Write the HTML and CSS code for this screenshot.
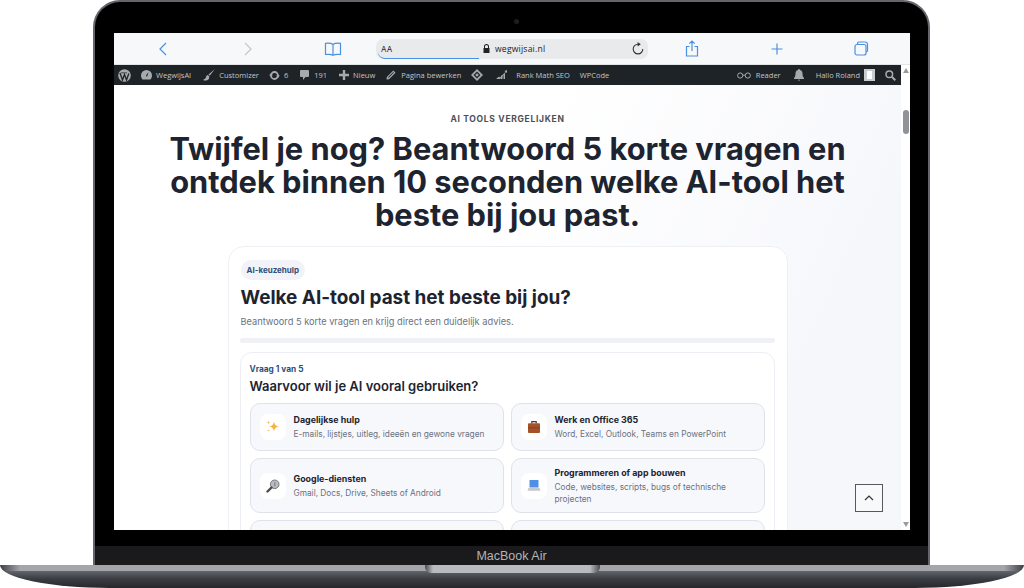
FILE: index.html
```html
<!DOCTYPE html>
<html lang="nl">
<head>
<meta charset="utf-8">
<title>WegwijsAI</title>
<link rel="stylesheet" href="styles.css">
</head>
<body>
<div class="device">
  <div class="lid">
    <div class="bezel"><span class="camera"></span></div>
    <div class="screen">
      <div class="toolbar">
        <span class="slot"><svg width="12" height="16" viewBox="0 0 12 16"><path class="blue" d="M9 2 3 8l6 6"/></svg></span>
        <span class="slot"><svg width="12" height="16" viewBox="0 0 12 16"><path class="grey" d="m3 2 6 6-6 6"/></svg></span>
        <span class="slot"><svg width="18" height="14" viewBox="0 0 18 14"><path class="blue" d="M9 2.500C7.500 1.200 4.500 1 1.500 1.300V12.500C4.500 12.200 7.500 12.300 9 13.300 10.500 12.300 13.500 12.200 16.500 12.500V1.300C13.500 1 10.500 1.200 9 2.500V13.300"/></svg></span>
        <div class="address">
          <span class="aa">AA</span>
          <svg class="lock" width="7" height="9" viewBox="0 0 7 9"><path fill="#222" d="M1 4V2.600a2.500 2.500 0 0 1 5 0V4h.5v5H.5V4zm1 0h3V2.600a1.500 1.500 0 0 0-3 0z"/></svg>
          <span class="domain">wegwijsai.nl</span>
          <svg class="reload" width="12" height="13" viewBox="0 0 12 13"><path fill="none" stroke="#333" stroke-width="1.100" d="M6 2.300a4.800 4.800 0 1 0 4.800 4.800"/><path fill="#333" d="M5.600 0 8.800 2.300 5.600 4.500z"/></svg>
        </div>
        <span class="slot"><svg width="14" height="17" viewBox="0 0 14 17"><path class="blue" d="M4.500 6.500H1.500v9.500h11V6.500h-3M7 11V1.200M4.300 3.700 7 1l2.700 2.700"/></svg></span>
        <span class="slot"><svg width="14" height="14" viewBox="0 0 14 14"><path class="blue" d="M7 1.500v11M1.500 7h11"/></svg></span>
        <span class="slot"><svg width="15" height="15" viewBox="0 0 15 15"><path class="blue" d="M3.500 3V2.500a1.500 1.500 0 0 1 1.500-1.500h6a2.500 2.500 0 0 1 2.500 2.500V9.500a1.500 1.500 0 0 1-1.500 1.500"/><rect class="blue" x="1" y="3.500" width="11" height="10.500" rx="2"/></svg></span>
      </div>
      <div class="viewport">
        <div class="site">
          <nav class="wpbar">
            <span class="wp wp-logo"><svg width="13" height="13" viewBox="0 0 13 13"><circle cx="6.500" cy="6.500" r="6.300" fill="#a7aaad"/><path fill="none" stroke="#1d2327" stroke-width="1.300" d="M2 4 4.500 11 6.500 5.500 8.500 11 10.800 4.500"/><path stroke="#1d2327" stroke-width=".8" d="M3.200 3.800H6.800M7.200 3.800H9"/></svg></span>
            <span class="wp wp-site"><svg width="11" height="10" viewBox="0 0 11 10"><path fill="#a7aaad" d="M5.500 0A5.500 5.500 0 0 0 0 5.500C0 7 .6 8.400 1.500 9.400h8C10.400 8.400 11 7 11 5.500A5.500 5.500 0 0 0 5.500 0zM5 5.500 7.500 2 6.300 6.300A1 1 0 0 1 5 5.500z"/></svg>WegwijsAI</span>
            <span class="wp wp-cust"><svg width="12" height="12" viewBox="0 0 12 12"><path fill="#a7aaad" d="M12 0 5.500 5.500l1.200 1.300zM4.800 6C3 6.300 3.300 8 2.600 9 2.200 9.800 1 10.500 0 11c2 1 5 .8 6-1.500.4-1 .3-1.800-.1-2.400z"/></svg>Customizer</span>
            <span class="wp wp-upd"><svg width="11" height="11" viewBox="0 0 11 11"><path fill="none" stroke="#a7aaad" stroke-width="1.800" d="M2 5.500a3.500 3.500 0 0 1 7 0 3.500 3.500 0 0 1-7 0"/><path fill="#a7aaad" d="M0 5.500 2 3.200l2 2.300zM11 5.500 9 7.800 7 5.500z"/></svg>6</span>
            <span class="wp wp-com"><svg width="9" height="10" viewBox="0 0 9 10"><path fill="#a7aaad" d="M1 0h7a1 1 0 0 1 1 1v5a1 1 0 0 1-1 1H5.500L3 10V7H1a1 1 0 0 1-1-1V1a1 1 0 0 1 1-1z"/></svg>191</span>
            <span class="wp wp-new"><svg width="10" height="10" viewBox="0 0 10 10"><path fill="#a7aaad" d="M3.800 0h2.400v3.800H10v2.400H6.200V10H3.800V6.200H0V3.800h3.800z"/></svg>Nieuw</span>
            <span class="wp wp-edit"><svg width="10" height="10" viewBox="0 0 10 10"><path fill="#a7aaad" d="M7.300.5 9.500 2.700 3 9.200.5 9.500.8 7z"/><path fill="#1d2327" d="M2 7.200 7.300 2l.6.600L2.700 7.800z"/></svg>Pagina bewerken</span>
            <span class="wp wp-dia"><svg width="12" height="12" viewBox="0 0 12 12"><path fill="#a7aaad" d="M6 0 12 6 6 12 0 6z"/><path fill="#1d2327" d="M6 2.500 9.500 6 6 9.500 2.500 6z"/><path fill="#a7aaad" d="M6 4.200 7.800 6 6 7.800 4.200 6z"/></svg></span>
            <span class="wp wp-rank"><svg width="11" height="10" viewBox="0 0 11 10"><path fill="#a7aaad" d="M0 9 3 6.500l1 1L9.500 2 8.500 1 11 0v3L10 2.300 4.200 9z"/><path fill="#a7aaad" d="M5 5.500h1.500V9H5zM7.500 3.800H9V9H7.500z"/></svg>Rank Math SEO</span>
            <span class="wp wp-code">WPCode</span>
            <span class="wp wp-reader"><svg width="14" height="7" viewBox="0 0 14 7"><g fill="none" stroke="#a7aaad"><circle cx="3.200" cy="3.500" r="2.600"/><circle cx="10.800" cy="3.500" r="2.600"/><path d="M5.800 3.200h2.400"/></g></svg>Reader</span>
            <span class="wp wp-bell"><svg width="10" height="12" viewBox="0 0 10 12"><path fill="#a7aaad" d="M5 0a1 1 0 0 1 1 1c2 .5 2.500 2 2.500 3.500 0 2.500.5 3.500 1.500 4.500v1H0V9c1-1 1.500-2 1.500-4.500C1.500 3 2 1.500 4 1a1 1 0 0 1 1-1zM3.800 10.800h2.400L5 12z"/></svg></span>
            <span class="wp wp-user">Hallo Roland<span class="avatar"><i></i></span></span>
            <span class="wp wp-search"><svg width="11" height="11" viewBox="0 0 11 11"><circle cx="4.300" cy="4.300" r="3.300" fill="none" stroke="#a7aaad" stroke-width="1.500"/><path stroke="#a7aaad" stroke-width="2" d="m6.800 6.800 3.500 3.500"/></svg></span>
          </nav>
          <main class="page">
            <p class="eyebrow">AI TOOLS VERGELIJKEN</p>
            <h1 class="headline">Twijfel je nog? Beantwoord 5 korte vragen en ontdek binnen 10 seconden welke AI-tool het beste bij jou past.</h1>
            <section class="card">
              <span class="badge">AI-keuzehulp</span>
              <h2 class="title">Welke AI-tool past het beste bij jou?</h2>
              <p class="intro">Beantwoord 5 korte vragen en krijg direct een duidelijk advies.</p>
              <div class="progress"></div>
              <div class="question">
                <p class="step">Vraag 1 van 5</p>
                <h3 class="ask">Waarvoor wil je AI vooral gebruiken?</h3>
                <div class="options">
                  <div class="option">
                    <span class="tile"><svg width="16" height="16" viewBox="0 0 16 16"><path fill="#f9b13f" d="M9 2.500c.6 3.300 1.700 4.500 5 5-3.300.6-4.400 1.700-5 5-.6-3.300-1.700-4.400-5-5 3.300-.5 4.400-1.700 5-5z"/><path fill="#f9c46b" d="M3.500 1.500c.3 1.400.7 1.800 2 2-1.300.3-1.700.7-2 2-.3-1.300-.7-1.700-2-2 1.300-.2 1.700-.6 2-2zM3.500 10c.2 1 .5 1.300 1.500 1.500-1 .2-1.300.5-1.500 1.500-.2-1-.5-1.300-1.500-1.500 1-.2 1.300-.5 1.500-1.500z"/></svg></span>
                    <div class="copy"><strong>Dagelijkse hulp</strong><span>E-mails, lijstjes, uitleg, ideeën en gewone vragen</span></div>
                  </div>
                  <div class="option">
                    <span class="tile"><svg width="14" height="14" viewBox="0 0 14 14"><path fill="none" stroke="#5a3218" stroke-width="1.200" d="M4.800 3.500V1.600h4.400v1.900"/><rect x="1" y="3.300" width="12" height="9.700" rx="1" fill="#a5522a"/><path fill="#7e3d1d" d="M1 7.500h12v.8H1z"/></svg></span>
                    <div class="copy"><strong>Werk en Office 365</strong><span>Word, Excel, Outlook, Teams en PowerPoint</span></div>
                  </div>
                  <div class="option">
                    <span class="tile"><svg width="14" height="14" viewBox="0 0 14 14"><circle cx="8.700" cy="5.300" r="4.300" fill="#b9bcc2" stroke="#777" stroke-width="1"/><path fill="#8d9097" d="M8 3h1.500v4.500H8z"/><path stroke="#4a4a4e" stroke-width="2.400" stroke-linecap="round" d="m5.500 8.500-4 4"/></svg></span>
                    <div class="copy"><strong>Google-diensten</strong><span>Gmail, Docs, Drive, Sheets of Android</span></div>
                  </div>
                  <div class="option">
                    <span class="tile"><svg width="14" height="13" viewBox="0 0 14 13"><rect x="2.500" y="1" width="9" height="7.500" rx=".6" fill="#4f8fe6"/><path fill="#c5c8ce" d="M1.500 8.800h11l1 3H.5z"/></svg></span>
                    <div class="copy"><strong>Programmeren of app bouwen</strong><span>Code, websites, scripts, bugs of technische projecten</span></div>
                  </div>
                  <div class="option"></div>
                  <div class="option"></div>
                </div>
              </div>
            </section>
            <button class="totop" type="button" aria-label="Naar boven"><svg width="10" height="6" viewBox="0 0 10 6"><path fill="none" stroke="#333" stroke-width="1.200" d="m1 5 4-4 4 4"/></svg></button>
          </main>
        </div>
        <div class="scrollbar">
          <span class="arrow up"></span>
          <span class="thumb"></span>
          <span class="arrow down"></span>
        </div>
      </div>
    </div>
    <div class="chin-gap"></div>
    <div class="chin">MacBook Air</div>
  </div>
  <div class="base"><span class="notch"></span></div>
</div>
</body>
</html>
```

FILE: styles.css
```css
* { box-sizing: border-box; }
html, body { margin: 0; height: 588px; overflow: hidden; background: #fff; }
body { font-family: "Inter", "Liberation Sans", sans-serif; color: #1d2430; }
p, h1, h2, h3 { margin: 0; }

.device { width: 1024px; height: 588px; display: flex; flex-direction: column; }
.lid {
  width: 837px; height: 565px; margin-left: 93px;
  display: flex; flex-direction: column;
  background: #000;
  border: 2px solid #63666b; border-bottom: 0;
  border-radius: 27px 27px 0 0;
  overflow: hidden;
}
.bezel { height: 31px; display: flex; justify-content: center; padding-top: 17px; flex: none; }
.camera { width: 5px; height: 5px; border-radius: 50%; background: #1c1e22; margin-left: 10px; }
.screen {
  width: 796px; height: 497px; margin-left: 19px; flex: none;
  display: flex; flex-direction: column; background: #fff; overflow: hidden;
}
.chin-gap { height: 16px; flex: none; }
.chin {
  height: 19px; flex: none; background: #1a1a1c; color: #b4b4b6;
  font: 12.5px/19px "Liberation Sans", sans-serif; text-align: center; padding-top: 1px;
}

.toolbar {
  height: 32px; flex: none; display: flex; align-items: center;
  padding-left: 6px; background: #f7f8fa; border-bottom: 1px solid #e3e4e6;
}
.slot { width: 85px; flex: none; display: flex; justify-content: center; align-items: center; }
.blue { fill: none; stroke: #4a90e2; stroke-width: 1.200; }
.grey { fill: none; stroke: #c4c6ca; stroke-width: 1.200; }
.address {
  width: 272px; height: 20px; margin-left: 1px; margin-right: 1px; flex: none;
  display: flex; align-items: center;
  background: #e9eaec; border-radius: 7px; padding: 0 4px 0 6px;
  font: 9px "Inter", sans-serif; color: #222;
}
.aa { width: 101px; height: 20px; line-height: 20px; font-size: 8px; border-bottom: 1px solid #4a90e2; border-radius: 0 0 0 7px; flex: none; margin-left: -4px; padding-left: 3px; }
.lock { margin-left: 4px; flex: none; }
.domain { margin-left: 5px; font-family: "Open Sans", sans-serif; font-size: 8.600px; letter-spacing: .2px; }
.reload { margin-left: auto; margin-right: 0; }

.viewport { flex: 1; min-height: 0; display: flex; }
.site { width: 787px; flex: none; display: flex; flex-direction: column; }
.wpbar {
  height: 20px; flex: none; display: flex; align-items: center;
  background: #1d2327; color: #c3c4c7;
  font: 7.500px "Open Sans", "Liberation Sans", sans-serif; white-space: nowrap;
}
.wp { display: flex; align-items: center; gap: 4px; flex: none; }
.wp-logo { margin-left: 4px; }
.wp-site { margin-left: 10px; }
.wp-cust { margin-left: 12px; }
.wp-upd { margin-left: 10px; }
.wp-com { margin-left: 12px; gap: 5px; }
.wp-new { margin-left: 12px; }
.wp-edit { margin-left: 11px; gap: 5px; }
.wp-dia { margin-left: 10px; }
.wp-rank { margin-left: 13px; gap: 9px; }
.wp-code { margin-left: 10px; }
.wp-reader { margin-left: auto; gap: 5px; }
.wp-bell { margin-left: 13px; }
.wp-user { margin-left: 12px; }
.avatar { width: 11px; height: 12px; background: #c9cccf; display: flex; justify-content: center; align-items: center; }
.avatar i { width: 5px; height: 8px; background: #fff; display: block; }
.wp-search { margin-left: 10px; margin-right: 5px; }

.page {
  position: relative; flex: 1; min-height: 0; overflow: hidden;
  display: flex; flex-direction: column; align-items: center;
  padding-top: 29px;
  background: linear-gradient(115deg, #fff 45%, #f6f7fb 85%);
}
.eyebrow {
  font: 700 8.500px/10px "Inter", sans-serif; letter-spacing: .7px; color: #4b5058;
}
.headline {
  width: 710px; margin-top: 8px; text-align: center;
  font: 700 30.800px/33px "Inter", sans-serif; color: #1d2430;
}
.card {
  width: 560px; margin-top: 15px; flex: none;
  background: #fff; border: 1px solid #eef0f5; border-radius: 16px;
  padding: 13px 11px 0;
  display: flex; flex-direction: column; align-items: flex-start;
}
.badge {
  height: 20px; padding: 0 6px; margin-left: 1px; background: #f1f3f8; border-radius: 10px;
  font: 700 8px/20px "Inter", sans-serif; color: #2f4f78;
}
.title { margin-top: 6px; font: 700 18.900px/24px "Inter", sans-serif; margin-left: 1px; }
.intro { margin-top: 6px; margin-left: 1px; font: 400 9.250px/12px "Inter", sans-serif; color: #6b7280; }
.progress { width: 535px; height: 5px; margin-top: 10px; background: #eff1f6; border-radius: 3px; }
.question {
  width: 535px; margin-top: 9px; height: 300px;
  border: 1px solid #eceef3; border-radius: 12px; padding: 11px 9px 0;
}
.step { font: 700 8.300px/10px "Inter", sans-serif; color: #2f4f78; }
.ask { margin-top: 3px; font: 600 13px/18px "Inter", sans-serif; color: #1d2430; }
.options { margin-top: 8px; display: grid; grid-template-columns: 254px 254px; grid-template-rows: 48px 55px 55px; gap: 7px; }
.option {
  display: flex; align-items: center; gap: 8px; padding: 0 9px;
  background: #f7f8fb; border: 1px solid #dfe2e8; border-radius: 10px;
}
.tile {
  width: 26px; height: 26px; flex: none; display: flex; align-items: center; justify-content: center;
  background: #fff; border-radius: 8px;
}
.copy { display: flex; flex-direction: column; gap: 3px; padding-top: 1px; }
.copy strong { font: 700 8.900px/12px "Inter", sans-serif; color: #1d2430; }
.copy span { font: 400 8.300px/11.500px "Inter", sans-serif; color: #6b7280; }
.totop {
  position: absolute; left: 741px; top: 399px;
  width: 28px; height: 28px; padding: 0;
  display: flex; align-items: center; justify-content: center;
  background: #f8f9fb; border: 1.500px solid #55585e;
}

.scrollbar {
  width: 9px; flex: none; display: flex; flex-direction: column; align-items: center;
  background: #fff;
}
.arrow { width: 0; height: 0; border-left: 3.500px solid transparent; border-right: 3.500px solid transparent; flex: none; }
.up { border-bottom: 5px solid #9a9a9a; margin-top: 3px; }
.down { border-top: 5px solid #9a9a9a; margin-top: auto; margin-bottom: 3px; }
.thumb { width: 6px; height: 24px; margin-top: 37px; background: #8f9296; border-radius: 3px; flex: none; }

.base {
  position: relative; width: 1024px; height: 23px; flex: none;
  border-radius: 0 0 110px 110px / 0 0 23px 23px;
  background:
    linear-gradient(90deg, #3d3f45 0, rgba(61,63,69,0) 20px, rgba(61,63,69,0) 1004px, #3d3f45 100%) 0 0 / 100% 6px no-repeat,
    linear-gradient(180deg, #a4a5aa 0, #a4a5aa 6px, #62646c 6px, #3a3c43 14px, #26272c 100%);
  overflow: hidden;
}
.notch {
  position: absolute; left: 425px; top: 0; width: 175px; height: 8px;
  border-radius: 0 0 6px 6px;
  background: linear-gradient(90deg, #4a4b50 0, #b9babd 8px, #b9babd 165px, #4a4b50 100%);
}
```
